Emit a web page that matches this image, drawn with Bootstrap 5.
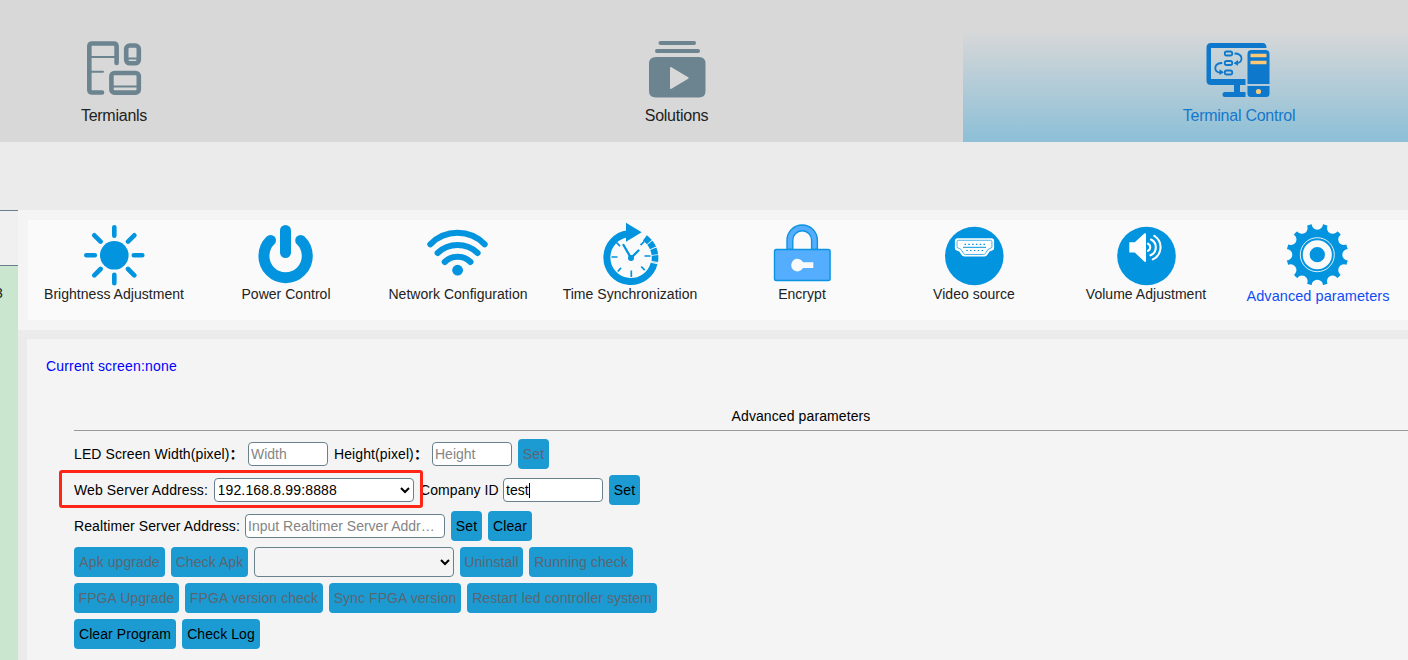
<!DOCTYPE html>
<html lang="en">
<head>
<meta charset="utf-8">
<title>Terminal Control</title>
<link href="https://cdn.jsdelivr.net/npm/bootstrap@5.3.0/dist/css/bootstrap.min.css" rel="stylesheet">
<style>
body{font-family:"Liberation Sans","Noto Sans CJK SC",sans-serif;font-size:14px;line-height:20px;color:#000;background:#ebebeb;height:660px;overflow:hidden}
svg{display:block}
.topbar{height:142px;background:#d8d8d8;overflow:hidden;margin-bottom:68px}
.track{margin-left:-162px;width:1677px;gap:10.5px}
.main-tab{width:552px;height:142px;padding-top:36px;font-size:16px;line-height:24px;letter-spacing:-.25px;color:#222}
.main-tab svg{margin-bottom:4px}
.main-tab.on{color:#1478cc;background:linear-gradient(#d8d8d8 30px,#8fc0d7 138px)}
.side{width:18px;flex:none;height:450px;background:#cbe6cf;border-top:1px solid #68818d;overflow:hidden}
.side-head{height:55px;background:#f0f0f0;border-bottom:1px solid #68818d}
.side-item{margin:17px 0 0 -5px;color:#222}
.tools{height:120px;background:#f4f4f4;padding:10px 0 10px 10px}
.tool-row{height:100px;width:1380px;background:#fafafa}
.tool{width:172px;flex:none;color:#222;letter-spacing:.03px}
.tool.on{color:#0d4df5;font-size:14.5px;letter-spacing:.06px}
.tool.on span{padding-top:2px}
.tool svg{margin-bottom:-4px}
.panel{margin:9px 0 0 9px;background:#f4f4f4;height:321px;padding:17px 0 0 19px}
.screen-name{color:#00f;letter-spacing:.17px}
.form-area{margin:30px 0 0 28px;width:1454px;letter-spacing:.1px}
.section-title{height:25px;border-bottom:1px solid #999;margin-bottom:8px}
.line{height:30px;gap:6px;margin-bottom:6px}
.line label{white-space:nowrap;flex:none}
.fld{width:200px;height:24px;border:1px solid #68818d;border-radius:4px;padding:1px 2px;background:#fff;color:#000;font-size:14px;text-overflow:ellipsis;outline:0;flex:none}
.fld::placeholder{color:#858585;opacity:1}
select.fld{padding:0;text-indent:-1.5px;letter-spacing:.16px}
.tall{height:30px;background:#f4f4f4}
.act{height:30px;border-radius:4px;border:0;background:#1c9bd3;color:#000;padding:0;font-size:14px;letter-spacing:.08px;white-space:nowrap;flex:none}
.act:disabled{color:#5a6670}
.caret{left:26px;top:5px;width:1px;height:15px;background:#000}
.mark-box{left:-15px;top:-5px;width:364px;height:38px;border:3px solid #ff2617;border-radius:3px;pointer-events:none}
</style>
</head>
<body>
<header class="topbar">
 <nav class="track d-flex">
  <a class="main-tab d-flex flex-column align-items-center text-decoration-none">
   <svg width="64" height="64" viewBox="82 36 64 64" fill="none" stroke="#6b8490" stroke-linecap="round" stroke-linejoin="round">
    <path stroke-width="4.6" d="M116.600 63V46.500q0-3-3-3H92.300q-3 0-3 3v43q0 3 3 3H102"/>
    <path stroke-width="2" d="M90 57h25M90 71.800h13"/>
    <rect x="126.200" y="45.500" width="12.600" height="17.800" rx="3.500" stroke-width="4.600"/><path stroke-width="2" d="M128 58.400h9"/>
    <rect x="111.400" y="73" width="27.400" height="19.600" rx="3" stroke-width="4.600"/><path stroke-width="2" d="M113 86.500h24"/>
   </svg><span>Termianls</span></a>
  <a class="main-tab d-flex flex-column align-items-center text-decoration-none">
   <svg width="64" height="64" viewBox="645 36 64 64" fill="#6b8490">
    <rect x="658.5" y="41" width="37.5" height="4" rx="2"/><rect x="655" y="49" width="45" height="4" rx="2"/>
    <path fill-rule="evenodd" d="M656 57h43q6.500 0 6.500 6.500v27.500q0 6.500-6.500 6.500h-43q-7 0-7-6.500v-27.500q0-6.500 7-6.500zM670 68v20q0 1.500 1.400.8l16.800-10q1.200-.8 0-1.600l-16.800-10q-1.400-.7-1.400.8z"/>
   </svg><span>Solutions</span></a>
  <a class="main-tab on d-flex flex-column align-items-center text-decoration-none">
   <svg width="66" height="64" viewBox="1206 36 66 64" fill="#0d78cc">
    <path fill-rule="evenodd" d="M1211 43h51.500q4 0 4 5h-55.500v31h34.500v6h-5.500v7h5.500v5h-20.500q-2.500 0-2.500-2.500t2.500-2.500h9v-7h-23q-4.500 0-4.500-4.500v-33q0-4.500 4.500-4.500z"/>
    <path d="M1247.500 84V54q0-4 4-4h14q4 0 4 4v30zM1247.500 86h22v7.500q0 3.500-3.500 3.500h-15q-3.500 0-3.500-3.500z"/>
    <path fill="#fdc873" d="M1250.500 53.700h16v3.500h-16zM1250.500 60.700h16v3.500h-16z"/><circle cx="1258.500" cy="91.500" r="2.600" fill="#fdc873"/>
    <g fill="none" stroke="#0d78cc" stroke-width="1.800"><rect x="1224.800" y="51.500" width="7.400" height="4" rx="1.800"/><rect x="1224.800" y="61" width="7.400" height="4" rx="1.800"/><rect x="1224.800" y="70.500" width="7.400" height="4" rx="1.800"/>
    <path d="M1234.500 53.500c9 0 9 9.500 2 9.500M1222.300 63c-9 0-9 9.500-2 9.500"/></g>
    <path d="M1233.600 63.200l4.400-3.200v5.800zM1223.900 72.300l-4.400-3v5.800z"/>
   </svg><span>Terminal Control</span></a>
 </nav>
</header>
<div class="d-flex">
 <aside class="side"><div class="side-head"></div><div class="side-item">3</div></aside>
 <main class="flex-grow-1 overflow-hidden">
  <section class="tools">
   <div class="tool-row d-flex">
    <a class="tool d-flex flex-column align-items-center text-decoration-none">
     <svg width="68" height="68" viewBox="80 220 68 68"><circle cx="114.300" cy="255.300" r="14.300" fill="#0394df"/><path transform="translate(114.300 255.300)" stroke="#0394df" stroke-width="4.600" stroke-linecap="round" d="M0-28v8.500M0 28v-8.500M-28 0h8.500M28 0h-8.500M-20-20l6.300 6.300M20-20l-6.300 6.300M-20 20l6.300-6.300M20 20l-6.300-6.300"/></svg><span>Brightness Adjustment</span></a>
    <a class="tool d-flex flex-column align-items-center text-decoration-none">
     <svg width="68" height="68" viewBox="252 220 68 68" fill="none" stroke="#0394df" stroke-width="11" stroke-linecap="round"><path d="M270.500 240.400A21.700 21.700 0 1 0 300.700 240.400M285.500 230.500v22"/></svg><span>Power Control</span></a>
    <a class="tool d-flex flex-column align-items-center text-decoration-none">
     <svg width="68" height="68" viewBox="424 220 68 68" fill="none" stroke="#0394df" stroke-width="6" stroke-linecap="round"><path d="M430.300 244.300a37.900 37.900 0 0 1 54.400 0M437.600 253a29.300 29.300 0 0 1 40 0M444.700 262a18.300 18.300 0 0 1 25.800 0"/><circle cx="457.600" cy="270.200" r="5.400" fill="#0394df" stroke="none"/></svg><span>Network Configuration</span></a>
    <a class="tool d-flex flex-column align-items-center text-decoration-none">
     <svg width="68" height="68" viewBox="596 220 68 68" fill="none" stroke="#0394df"><path stroke-width="7" d="M654.100 263.500A24 24 0 1 1 628 233.700"/><path stroke-width="6.600" stroke-dasharray="6.100 .8" d="M644.900 237.900A24.600 24.600 0 0 1 654.600 262.600"/><path fill="#0394df" stroke="none" d="M626 222.700l15.700 9.500-15.700 9.500z"/><path stroke-width="1.700" d="M611.500 257h6M644.500 256h6M631.300 270.500v6.500M616.500 242.500l3.500 3.600M640.500 245.200l3.800-3.800M617.800 271.500l3.200-3.600M641.200 266.500l3.500 3.700"/><path stroke-width="2.300" stroke-linecap="round" d="M623.500 245l7.500 13 7.500-7.500"/><circle cx="631" cy="258" r="3" fill="#0394df" stroke="none"/></svg><span>Time Synchronization</span></a>
    <a class="tool d-flex flex-column align-items-center text-decoration-none">
     <svg width="68" height="68" viewBox="768 220 68 68" fill="#55adfe" stroke="#0c94e2" stroke-width="1.400"><path d="M787 249.500v-9.300a15.200 15.200 0 0 1 30.400 0v9.300h-5.800v-9.300a9.400 9.400 0 0 0-18.800 0v9.300z"/><rect x="774.500" y="249.500" width="55.600" height="31" rx="1.800"/><path fill="#fafafa" stroke="none" d="M803 262.200h10.300v5.800h-10.300a6.300 6.300 0 1 1 0-5.800z"/></svg><span>Encrypt</span></a>
    <a class="tool d-flex flex-column align-items-center text-decoration-none">
     <svg width="68" height="68" viewBox="940 220 68 68"><circle cx="974.300" cy="256" r="29.300" fill="#0394df"/><path fill="#fff" d="M957.500 238.300h34q2.600 0 2.600 2.600v7q0 2-2 2.700l-2.500 1-2.200 3.200q-1 1.700-3 1.700h-20q-2 0-3-1.700l-2.200-3.200-2.500-1q-1.800-.7-1.800-2.700v-7q0-2.600 2.600-2.600z"/><path fill="none" stroke="#0394df" stroke-width=".7" d="M958.500 240.300h32q1.400 0 1.400 1.400v5.800l-4 2-2.500 4q-.7 1-2 1h-17.800q-1.300 0-2-1l-2.500-4-4-2v-5.800q0-1.400 1.400-1.400z"/><path stroke="#0394df" stroke-width="1" d="M963 247.300h23"/><path stroke="#0394df" stroke-width="1.200" stroke-dasharray="1.500 2.300" d="M964.500 244.300h21M966.300 250.500h17"/></svg><span>Video source</span></a>
    <a class="tool d-flex flex-column align-items-center text-decoration-none">
     <svg width="68" height="68" viewBox="1112 220 68 68"><circle cx="1146.500" cy="256" r="29.300" fill="#0394df"/><path fill="#fff" d="M1129.300 242.300h5.500l9.500-8.700q1.700-1.200 1.700.8v26.400q0 2-1.700.8l-9.500-9.100h-5.500z"/><path fill="none" stroke="#fff" stroke-width="2.100" stroke-linecap="round" d="M1148 243.700a4 4 0 0 1 0 7.200M1151 239.500a8.700 8.700 0 0 1-.5 15.800M1154.300 235.800a13.500 13.500 0 0 1-1.500 23.600"/></svg><span>Volume Adjustment</span></a>
    <a class="tool on d-flex flex-column align-items-center text-decoration-none">
     <svg width="68" height="68" viewBox="1284 220 68 68"><g transform="translate(1317.300 254.700)" fill="none"><circle r="30.900" fill="#0394df"/><g fill="#fafafa"><circle cy="-30.700" r="5.700"/><circle cy="-30.700" r="5.700" transform="rotate(30)"/><circle cy="-30.700" r="5.700" transform="rotate(60)"/><circle cy="-30.700" r="5.700" transform="rotate(90)"/><circle cy="-30.700" r="5.700" transform="rotate(120)"/><circle cy="-30.700" r="5.700" transform="rotate(150)"/><circle cy="-30.700" r="5.700" transform="rotate(180)"/><circle cy="-30.700" r="5.700" transform="rotate(210)"/><circle cy="-30.700" r="5.700" transform="rotate(240)"/><circle cy="-30.700" r="5.700" transform="rotate(270)"/><circle cy="-30.700" r="5.700" transform="rotate(300)"/><circle cy="-30.700" r="5.700" transform="rotate(330)"/></g><circle r="17" stroke="#fafafa" stroke-width=".9"/><circle r="11.100" stroke="#fafafa" stroke-width="6.900"/></g></svg><span>Advanced parameters</span></a>
   </div>
  </section>
  <section class="panel">
   <div class="screen-name">Current screen:none</div>
   <div class="form-area">
    <div class="section-title text-center">Advanced parameters</div>
    <div class="line d-flex align-items-center"><label style="width:168px">LED Screen Width(pixel)<b>：</b></label><input class="fld" style="width:80px" placeholder="Width"><label style="width:92px">Height(pixel)<b>：</b></label><input class="fld" style="width:80px" placeholder="Height"><button class="act" style="width:31px" disabled>Set</button></div>
    <div class="line d-flex align-items-center position-relative"><label style="width:134px">Web Server Address:</label><select class="fld"><option>192.168.8.99:8888</option></select><label style="width:77px">Company ID</label><div class="position-relative d-flex"><input class="fld" style="width:100px" value="test"><i class="caret position-absolute"></i></div><button class="act" style="width:31px">Set</button><div class="mark-box position-absolute"></div></div>
    <div class="line d-flex align-items-center"><label style="width:165px">Realtimer Server Address:</label><input class="fld" placeholder="Input Realtimer Server Address"><button class="act" style="width:31px">Set</button><button class="act" style="width:44px">Clear</button></div>
    <div class="line d-flex align-items-center"><button class="act" style="width:91px" disabled>Apk upgrade</button><button class="act" style="width:77px" disabled>Check Apk</button><select class="fld tall"></select><button class="act" style="width:63px" disabled>Uninstall</button><button class="act" style="width:104px" disabled>Running check</button></div>
    <div class="line d-flex align-items-center"><button class="act" style="width:105px" disabled>FPGA Upgrade</button><button class="act" style="width:138px" disabled>FPGA version check</button><button class="act" style="width:132px" disabled>Sync FPGA version</button><button class="act" style="width:190px" disabled>Restart led controller system</button></div>
    <div class="line d-flex align-items-center"><button class="act" style="width:102px">Clear Program</button><button class="act" style="width:78px">Check Log</button></div>
   </div>
  </section>
 </main>
</div>
<script src="https://cdn.jsdelivr.net/npm/bootstrap@5.3.0/dist/js/bootstrap.bundle.min.js"></script>
</body>
</html>
